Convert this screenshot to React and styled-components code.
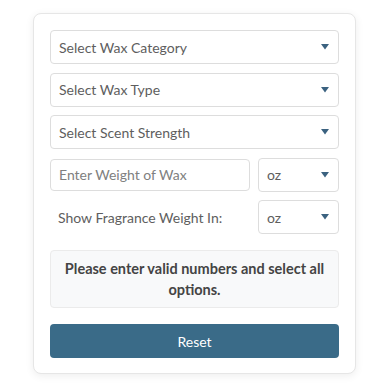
import styled, { createGlobalStyle } from "styled-components";

const Global = createGlobalStyle`
    body {
        margin: 0;
        background: #ffffff;
        font-family: 'Lato', 'Noto Sans', sans-serif;
    }
`

const Page = styled.div`
    width: 390px;
    height: 390px;
    padding: 13px 0 0 33px;
    box-sizing: border-box;
`

const Card = styled.div`
    width: 323px;
    box-sizing: border-box;
    padding: 16px 16px 15px 16px;
    background: #fff;
    border: 1px solid #e6e6e6;
    border-radius: 8px;
    box-shadow: 0 2px 8px rgba(0, 0, 0, 0.07);
    display: flex;
    flex-direction: column;
    gap: 8.5px;
`

const Field = styled.div`
    height: 34px;
    box-sizing: border-box;
    border: 1px solid #dddddd;
    border-radius: 4px;
    display: flex;
    align-items: center;
    justify-content: space-between;
    padding: 0 9px 0 8px;
    font-size: 14px;
    color: #5e5e5e;
    width: ${(props) => props.width || 'auto'};
`

const Arrow = () => (
    <svg width="8" height="6" viewBox="0 0 8 6">
        <path d="M0 0 H8 L4 5.5 Z" fill="#3b6280" />
    </svg>
)

const Row = styled.div`
    display: flex;
    align-items: center;
    gap: 8px;
`

const WeightInput = styled.input`
    flex: 1;
    min-width: 0;
    height: 32px;
    box-sizing: border-box;
    border: 1px solid #dddddd;
    border-radius: 4px;
    padding: 0 8px;
    font-family: inherit;
    font-size: 14px;
    color: #5e5e5e;
    outline: none;
    &::placeholder {
        color: #808080;
    }
`

const Label = styled.div`
    flex: 1;
    padding-left: 8px;
    font-size: 14px;
    color: #5e5e5e;
`

const Message = styled.div`
    margin-top: 7.5px;
    height: 58px;
    box-sizing: border-box;
    background: #f8f9fa;
    border: 1px solid #ebebeb;
    border-radius: 4px;
    display: flex;
    align-items: center;
    justify-content: center;
    text-align: center;
    padding: 0 4px;
    font-size: 14.5px;
    font-weight: 700;
    line-height: 21px;
    color: #444;
`

const ResetButton = styled.button`
    margin-top: 7.5px;
    height: 34px;
    border: none;
    border-radius: 4px;
    background: #3a6b88;
    color: #fff;
    font-family: inherit;
    font-size: 14px;
    cursor: pointer;
`

const App = () => {
    return (
        <>
            <Global />
            <Page>
                <Card>
                    <Field>Select Wax Category<Arrow /></Field>
                    <Field>Select Wax Type<Arrow /></Field>
                    <Field>Select Scent Strength<Arrow /></Field>
                    <Row>
                        <WeightInput placeholder="Enter Weight of Wax" />
                        <Field width="81px">oz<Arrow /></Field>
                    </Row>
                    <Row>
                        <Label>Show Fragrance Weight In:</Label>
                        <Field width="81px">oz<Arrow /></Field>
                    </Row>
                    <Message>Please enter valid numbers and select all options.</Message>
                    <ResetButton>Reset</ResetButton>
                </Card>
            </Page>
        </>
    )
}

export default App;
